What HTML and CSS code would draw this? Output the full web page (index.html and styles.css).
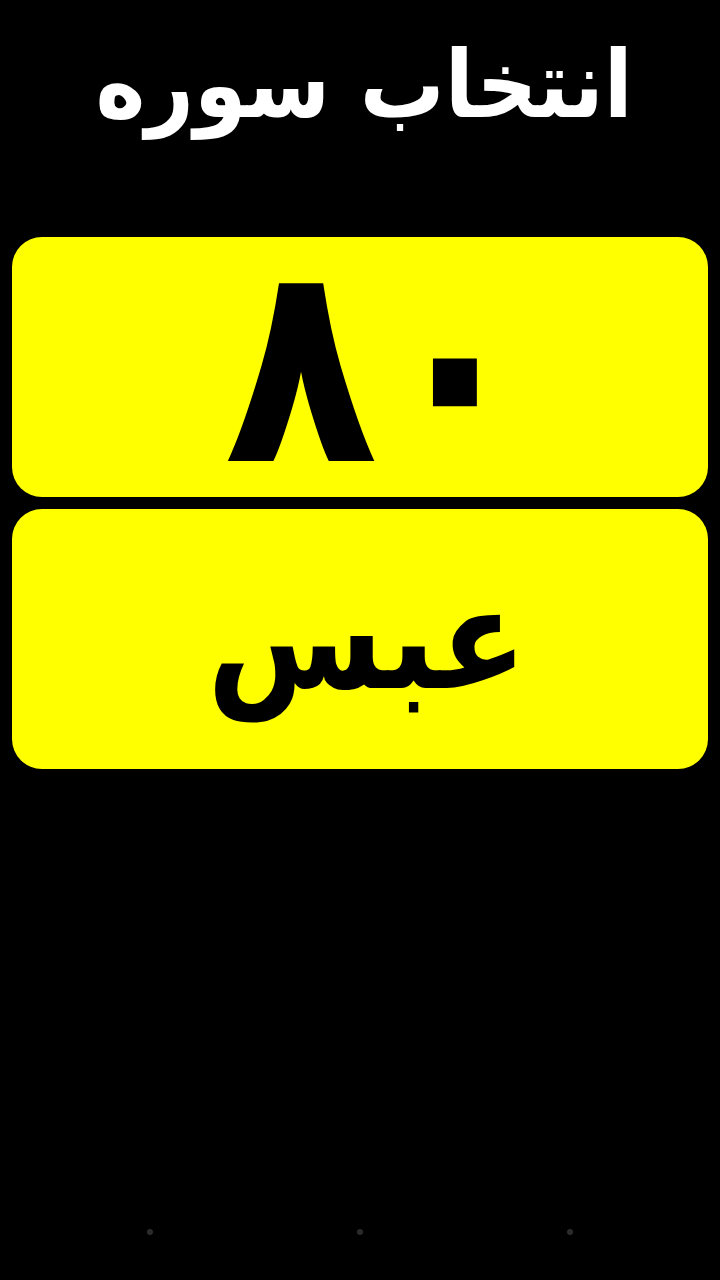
FILE: index.html
```html
<!DOCTYPE html>
<html lang="fa" dir="rtl">
<head>
<meta charset="utf-8">
<link rel="stylesheet" href="styles.css">
</head>
<body>
<div class="screen">
  <h1 class="title">انتخاب سوره</h1>
  <div class="cards">
    <div class="card"><span class="num">۸۰</span></div>
    <div class="card"><span class="name">عبس</span></div>
  </div>
  <div class="dots">
    <span class="dot"></span>
    <span class="dot"></span>
    <span class="dot"></span>
  </div>
</div>
</body>
</html>
```
FILE: styles.css
```css
html, body {
  margin: 0;
  padding: 0;
  background: #000;
}
.screen {
  width: 720px;
  height: 1280px;
  display: flex;
  flex-direction: column;
  font-family: "DejaVu Sans Condensed", "DejaVu Sans", sans-serif;
}
.title {
  margin: 0;
  height: 237px;
  display: flex;
  align-items: flex-start;
  justify-content: center;
  padding-top: 24px;
  padding-left: 8px;
  box-sizing: border-box;
  color: #fff;
  font-size: 94px;
  font-weight: bold;
  line-height: 1.3;
}
.cards {
  display: flex;
  flex-direction: column;
  gap: 12px;
  padding: 0 12px;
}
.card {
  height: 260px;
  background: #ffff00;
  border-radius: 30px;
  display: flex;
  align-items: center;
  justify-content: center;
  color: #000;
  font-weight: bold;
}
.num {
  font-size: 280px;
  line-height: 1;
  padding-left: 36px;
  margin-top: -6px;
}
.name {
  font-size: 142px;
  line-height: 1;
  padding-left: 14px;
}
.dots {
  margin-top: auto;
  display: flex;
  justify-content: space-between;
  padding: 0 147px 45px;
  direction: ltr;
}
.dot {
  width: 6px;
  height: 6px;
  border-radius: 50%;
  background: #2b2b2b;
}
```
